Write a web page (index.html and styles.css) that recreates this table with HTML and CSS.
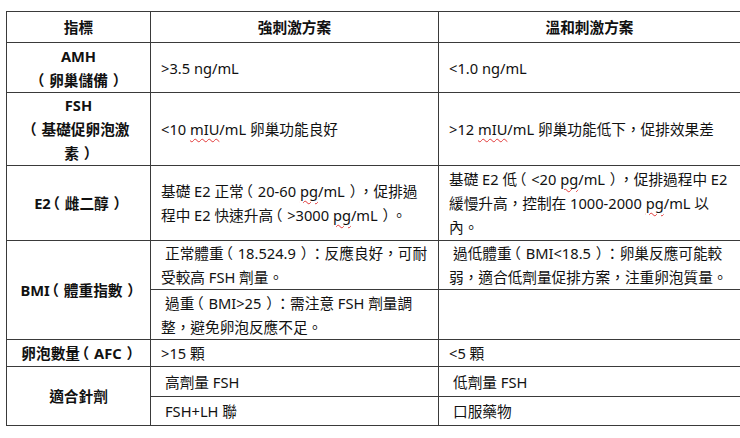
FILE: index.html
```html
<!DOCTYPE html>
<html lang="zh-Hant">
<head>
<meta charset="utf-8">
<title>刺激方案比較</title>
<link rel="stylesheet" href="styles.css">
</head>
<body>
<main class="page">
  <table class="plan">
    <colgroup>
      <col class="c1">
      <col class="c2">
      <col class="c3">
    </colgroup>
    <thead>
      <tr class="r-head">
        <th>指標</th>
        <th>強刺激方案</th>
        <th>溫和刺激方案</th>
      </tr>
    </thead>
    <tbody>
      <tr class="r-amh">
        <th>AMH<br><span class="po">（</span>卵巢儲備<span class="pc">）</span></th>
        <td>&gt;3.5 ng/mL</td>
        <td>&lt;1.0 ng/mL</td>
      </tr>
      <tr class="r-fsh">
        <th>FSH<br><span class="po">（</span>基礎促卵泡激<br>素<span class="pc">）</span></th>
        <td>&lt;10 <span class="sp">mIU</span>/mL 卵巢功能良好</td>
        <td>&gt;12 <span class="sp">mIU</span>/mL 卵巢功能低下，促排效果差</td>
      </tr>
      <tr class="r-e2">
        <th>E2<span class="po">（</span>雌二醇<span class="pc">）</span></th>
        <td>基礎 E2 正常<span class="po">（</span>20-60 <span class="sp">pg</span>/mL<span class="pc">）</span>，促排過<br>程中 E2 快速升高<span class="po">（</span>&gt;3000 <span class="sp">pg</span>/mL<span class="pc">）</span>。</td>
        <td>基礎 E2 低<span class="po">（</span>&lt;20 <span class="sp">pg</span>/mL<span class="pc">）</span>，促排過程中 E2<br>緩慢升高，控制在 1000-2000 <span class="sp">pg</span>/mL 以<br>內。</td>
      </tr>
      <tr class="r-bmi1">
        <th rowspan="2">BMI<span class="po">（</span>體重指數<span class="pc">）</span></th>
        <td><span class="lead">正常體重<span class="po">（</span>18.524.9<span class="pc">）</span>：反應良好，可耐</span><br>受較高 FSH 劑量。</td>
        <td><span class="lead">過低體重<span class="po">（</span>BMI&lt;18.5<span class="pc">）</span>：卵巢反應可能較</span><br>弱，適合低劑量促排方案，注重卵泡質量。</td>
      </tr>
      <tr class="r-bmi2">
        <td><span class="lead">過重<span class="po">（</span>BMI&gt;25<span class="pc">）</span>：需注意 FSH 劑量調</span><br>整，避免卵泡反應不足。</td>
        <td></td>
      </tr>
      <tr class="r-afc">
        <th>卵泡數量<span class="po">（</span>AFC<span class="pc">）</span></th>
        <td>&gt;15 顆</td>
        <td>&lt;5 顆</td>
      </tr>
      <tr class="r-inj1">
        <th rowspan="2">適合針劑</th>
        <td><span class="lead">高劑量 FSH</span></td>
        <td><span class="lead">低劑量 FSH</span></td>
      </tr>
      <tr class="r-inj2">
        <td><span class="lead">FSH+LH 聯</span></td>
        <td><span class="lead">口服藥物</span></td>
      </tr>
    </tbody>
  </table>
</main>
</body>
</html>
```

FILE: styles.css
```css
html, body {
  margin: 0;
  padding: 0;
  background: #ffffff;
}

body {
  font-family: "Noto Sans", "Noto Sans CJK TC", sans-serif;
  font-size: 11pt;
  color: #111111;
}

.page {
  padding: 11px 0 0 6px;
}

.plan {
  border-collapse: collapse;
  table-layout: fixed;
  width: 734px;
}

.c1 { width: 144px; }
.c2 { width: 288px; }
.c3 { width: 302px; }

.plan th,
.plan td {
  border: 1px solid #3a3a3a;
  padding: 0 4px 0 10px;
  line-height: 24px;
  vertical-align: middle;
  text-align: left;
  font-weight: 400;
  white-space: nowrap;
}

.plan th {
  text-align: center;
  font-weight: 700;
  padding: 0 2px;
}

.lead {
  padding-left: 4px;
}

/* full-width brackets: half-width glyph centred in a full-width slot */
.po,
.pc {
  font-feature-settings: "halt" 1;
}

.po {
  padding: 0 0.33em 0 0.13em;
}

.pc {
  padding: 0 0.13em 0 0.33em;
}

.sp {
  text-decoration: underline wavy #e23a3a;
  text-decoration-thickness: 1px;
  text-underline-offset: 3px;
}

.r-head { height: 31px; }
.r-amh { height: 50px; }
.r-fsh { height: 73px; }
.r-e2 { height: 75px; }
.r-bmi1 { height: 49px; }
.r-bmi2 { height: 50px; }
.r-afc { height: 27px; }
.r-inj1 { height: 30px; }
.r-inj2 { height: 29px; }
```
